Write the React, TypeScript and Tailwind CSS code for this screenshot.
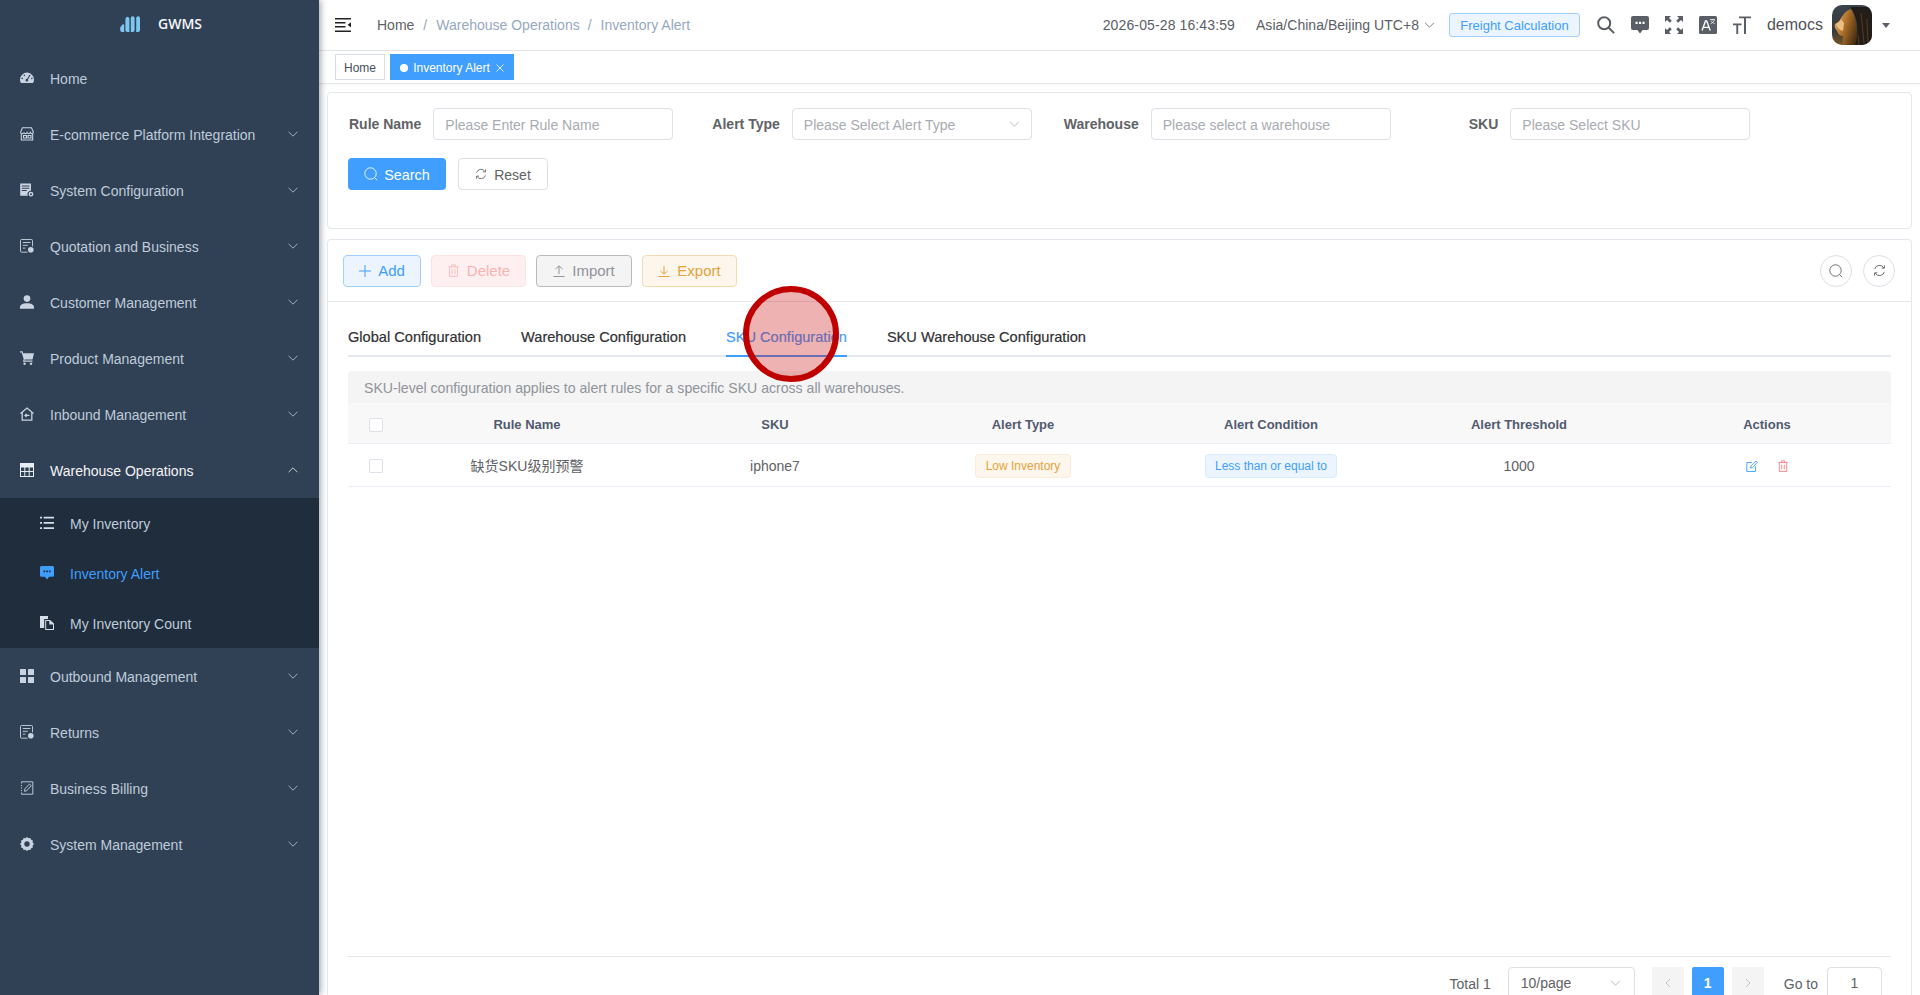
import React from 'react';

type IconProps = { className?: string };

// thin element-style arrows
const ArrowDown = ({ className = '' }: IconProps) => (
  <svg viewBox="0 0 10 6" className={className} fill="none" stroke="currentColor" strokeWidth="0.8">
    <path d="M.6.8 5 5.2 9.4.8" />
  </svg>
);
const ArrowUp = ({ className = '' }: IconProps) => (
  <svg viewBox="0 0 10 6" className={className} fill="none" stroke="currentColor" strokeWidth="0.8">
    <path d="M.6 5.2 5 .8l4.4 4.400" />
  </svg>
);

const IcoDash = () => (
  <svg viewBox="0 0 14 14" className="h-[14px] w-[14px]" fill="currentColor">
    <path fillRule="evenodd" d="M7 1.600A7 7 0 0 0 0 8.600c0 1.500.4 2.600 1 3.500h12c.6-.9 1-2 1-3.500a7 7 0 0 0-7-7ZM4 3.600l1.300.5-.5 1.200-1.300-.5.5-1.200Zm-2.200 3 1.300.4-.4 1.300-1.300-.4.4-1.300Zm7.900-3.200.9.6-2.600 4.500a1.300 1.300 0 1 1-1-.6l2.700-4.500Zm2.600 3.200.4 1.300-1.300.4-.4-1.300 1.300-.4Z" />
  </svg>
);
const IcoShop = () => (
  <svg viewBox="0 0 14 14" className="h-[14px] w-[14px]" fill="none" stroke="currentColor" strokeWidth="1.100">
    <path d="M2.500.8h9L13.400 5c0 1-.9 1.600-1.600 1.600-.8 0-1.400-.5-1.600-1.200-.3.7-.9 1.200-1.600 1.200s-1.300-.5-1.600-1.200c-.3.7-.9 1.200-1.600 1.200s-1.300-.5-1.600-1.200C3.900 6.100 3.200 6.600 2.300 6.600 1.500 6.600.6 6 .6 5L2.500.8Z" />
    <path d="M1.300 6.600v6.400h11.400V6.600M3.500 8.500h3v2.500h-3zM8 8.500h3v2.500H8z" />
  </svg>
);
const IcoConfig = () => (
  <svg viewBox="0 0 14 14" className="h-[14px] w-[14px]" fill="currentColor">
    <path fillRule="evenodd" d="M.2.400h10.800v7.400a3.400 3.400 0 0 0-3.200 5H.2V.4Zm1.600 2v1h7.600v-1H1.800Zm0 2.300v1h7.600v-1H1.800Zm0 2.300v1h5v-1h-5Z" />
    <path fillRule="evenodd" d="M11 8.800a2.400 2.400 0 1 1 0 4.800 2.400 2.400 0 0 1 0-4.800Zm0 1.400a1 1 0 1 0 0 2 1 1 0 0 0 0-2Z" />
  </svg>
);
const IcoForm = () => (
  <svg viewBox="0 0 14 14" className="h-[14px] w-[14px]" fill="none" stroke="currentColor" strokeWidth="0.9">
    <path d="M7.500 13.200H1.500a1 1 0 0 1-1-1V1.500a1 1 0 0 1 1-1h10a1 1 0 0 1 1 1v5.800" />
    <path d="M2.800 3.500h7.600M2.800 6.300h5M2.800 9.100h2.600" />
    <circle cx="10.800" cy="10.800" r="2.800" fill="currentColor" stroke="none" />
  </svg>
);
const IcoUser = () => (
  <svg viewBox="0 0 14 14" className="h-[14px] w-[14px]" fill="currentColor">
    <circle cx="7" cy="3.600" r="3.300" />
    <path d="M0 13.800v-1.600c0-2.500 2.800-4 7-4s7 1.500 7 4v1.600H0Z" />
  </svg>
);
const IcoCart = () => (
  <svg viewBox="0 0 14 14" className="h-[14px] w-[14px]" fill="currentColor">
    <path d="M0 .3h2.500l.6 1.900H14l-1.500 6.400H4.700l-.3 1h8.100v1.100H2.900l.8-2.400L1.700 1.400H0V.3Z" />
    <circle cx="4.600" cy="12.700" r="1.200" />
    <circle cx="11" cy="12.700" r="1.200" />
  </svg>
);
const IcoInbound = () => (
  <svg viewBox="0 0 14 14" className="h-[14px] w-[14px]" fill="none" stroke="currentColor" strokeWidth="1.300">
    <path d="M.5 6.500 7 1l6.500 5.500M2.200 5.400v7.800h9.600V5.400" />
    <path d="M9.500 8.400H5.200M6.600 6.900 5 8.400l1.600 1.500" />
  </svg>
);
const IcoTable = () => (
  <svg viewBox="0 0 14 14" className="h-[14px] w-[14px]" fill="currentColor">
    <path fillRule="evenodd" d="M0 0h14v14H0V0Zm1 4.400V8h3.300V4.400H1Zm4.300 0V8h3.400V4.400H5.300Zm4.400 0V8H13V4.400H9.700ZM1 9v4h3.300V9H1Zm4.300 0v4h3.400V9H5.300Zm4.400 0v4H13V9H9.700Z" />
  </svg>
);
const IcoList = () => (
  <svg viewBox="0 0 14 14" className="h-[14px] w-[14px]" fill="currentColor">
    <path d="M0 .8h2v1.800H0zM3.600.8H14v1.800H3.600zM0 6h2v1.800H0zM3.600 6H14v1.800H3.600zM0 11.200h2V13H0zM3.600 11.200H14V13H3.600z" />
  </svg>
);
const IcoChat = ({ className = 'h-[14px] w-[14px]' }: IconProps) => (
  <svg viewBox="0 0 14 14" className={className} fill="currentColor">
    <path fillRule="evenodd" d="M1.500 0h11A1.500 1.500 0 0 1 14 1.500v7.800a1.500 1.500 0 0 1-1.500 1.500H9.100L7 13.600l-2.100-2.800H1.500A1.500 1.500 0 0 1 0 9.300V1.500A1.500 1.500 0 0 1 1.500 0Zm2 4.500v1.700h1.700V4.500H3.500Zm2.700 0v1.700h1.700V4.500H6.200Zm2.700 0v1.700h1.700V4.500H8.900Z" />
  </svg>
);
const IcoCopy = () => (
  <svg viewBox="0 0 14 14" className="h-[14px] w-[14px]" fill="currentColor">
    <path d="M0 0h8v3H4.200v9H0V0Z" />
    <path fillRule="evenodd" d="M5.200 4H10l4 3.600V14H5.200V4Zm1 1v8h6.800V8.400H9.300V5H6.200Z" />
  </svg>
);
const IcoGrid = () => (
  <svg viewBox="0 0 14 14" className="h-[14px] w-[14px]" fill="currentColor">
    <rect x="0" y="0" width="6" height="6" rx="0.600" />
    <rect x="8" y="0" width="6" height="6" rx="0.600" />
    <rect x="0" y="8" width="6" height="6" rx="0.600" />
    <rect x="8" y="8" width="6" height="6" rx="0.600" />
  </svg>
);
const IcoBill = () => (
  <svg viewBox="0 0 14 14" className="h-[14px] w-[14px]" fill="none" stroke="currentColor" strokeWidth="0.9">
    <path d="M1.500 2.500V.8h11.300v12.400H1.500v-1.700M1.500 4v1.200M1.500 6.500v1.200M1.500 9v1.200" />
    <path d="M4.500 10.300 5 7.800 9.500 3l1.800 1.700-4.500 5-2.300.6Z" />
  </svg>
);
const IcoGear = () => (
  <svg viewBox="0 0 14 14" className="h-[14px] w-[14px]" fill="currentColor">
    <path fillRule="evenodd" d="M7 0l1.500 1.300 1.900-.4.700 1.900 1.800.7-.3 1.900L14 7l-1.400 1.600.3 1.900-1.800.7-.7 1.900-1.900-.4L7 14l-1.500-1.300-1.900.4-.7-1.900-1.800-.7.3-1.900L0 7l1.400-1.600-.3-1.900 1.800-.7.7-1.900 1.900.4L7 0Zm0 4.300a2.700 2.700 0 1 0 0 5.400 2.700 2.700 0 0 0 0-5.400Z" />
  </svg>
);

const SearchLine = ({ className = '' }: IconProps) => (
  <svg viewBox="0 0 14 14" className={className} fill="none" stroke="currentColor" strokeWidth="0.9">
    <circle cx="6.500" cy="6.500" r="5.700" />
    <path d="m10.700 10.700 2.500 2.500" />
  </svg>
);
const RefreshLine = ({ className = '' }: IconProps) => (
  <svg viewBox="0 0 14 14" className={className} fill="none" stroke="currentColor" strokeWidth="1">
    <path d="M1.800 5.500A5.400 5.400 0 0 1 11.700 4.200M12.200 8.500A5.400 5.400 0 0 1 2.300 9.800" />
    <path d="M12.300 1.500v3h-3M1.700 12.500v-3h3" />
  </svg>
);
const TrashLine = ({ className = '' }: IconProps) => (
  <svg viewBox="0 0 14 14" className={className} fill="none" stroke="currentColor" strokeWidth="0.9">
    <path d="M1.500 3h11M5 3V1h4v2M2.700 3v10.300h8.600V3M5.500 5.500v5.500M8.500 5.500v5.500" />
  </svg>
);

const menuTop = [
  { label: 'Home', icon: <IcoDash />, arrow: false },
  { label: 'E-commerce Platform Integration', icon: <IcoShop />, arrow: true },
  { label: 'System Configuration', icon: <IcoConfig />, arrow: true },
  { label: 'Quotation and Business', icon: <IcoForm />, arrow: true },
  { label: 'Customer Management', icon: <IcoUser />, arrow: true },
  { label: 'Product Management', icon: <IcoCart />, arrow: true },
  { label: 'Inbound Management', icon: <IcoInbound />, arrow: true },
];
const menuBottom = [
  { label: 'Outbound Management', icon: <IcoGrid /> },
  { label: 'Returns', icon: <IcoForm /> },
  { label: 'Business Billing', icon: <IcoBill /> },
  { label: 'System Management', icon: <IcoGear /> },
];

function Sidebar() {
  return (
    <aside className="relative z-10 flex h-full w-[319px] shrink-0 flex-col bg-[#304156] shadow-[2px_0_6px_rgba(0,21,41,0.35)]">
      <div className="flex h-[50px] items-center pb-[2px] pl-[120px]">
        <svg viewBox="0 0 22 16" className="h-[16px] w-[22px]">
          <g fill="#7cc6ef">
            <path d="M.2 11.500 2.400 8.500c.7-.7 1.800-.4 1.800.8V16H2.200A2 2 0 0 1 .2 14Z" />
            <path d="M5.400 3.800c0-2 1-3 2-3s2 .9 2 2.300V16H7.400a2 2 0 0 1-2-2Z" />
            <path d="M10.800 2.300c0-1.300.8-2 1.900-2s1.900.8 1.900 2V14a2 2 0 0 1-2 2h-1.800Z" />
            <path d="M16.200 2.300c0-1.300.8-2 1.900-2s1.900.8 1.900 2V14a2 2 0 0 1-2 2h-1.800Z" />
          </g>
        </svg>
        <span className="ml-[16px] font-['Open_Sans',sans-serif] text-[14px] font-semibold leading-none text-[#f4f6f8]">GWMS</span>
      </div>
      {menuTop.map((m) => (
        <div key={m.label} className="flex h-[56px] items-center pl-[20px] pr-[21px] text-[#bfcbd9]">
          <span className="w-[30px] text-[#c9d4e0]">{m.icon}</span>
          <span className="flex-1 pt-[2px] text-[14px]">{m.label}</span>
          {m.arrow && <ArrowDown className="h-[6px] w-[10px]" />}
        </div>
      ))}
      <div className="flex h-[56px] items-center pl-[20px] pr-[21px] text-[#f4f4f5]">
        <span className="w-[30px] text-[#e8edf3]"><IcoTable /></span>
        <span className="flex-1 pt-[3px] text-[14px]">Warehouse Operations</span>
        <ArrowUp className="h-[6px] w-[10px]" />
      </div>
      <div className="bg-[#1f2d3d]">
        <div className="flex h-[50px] items-center pl-[40px] text-[#bfcbd9]">
          <span className="w-[30px] text-[#d5dde6]"><IcoList /></span>
          <span className="pt-[3px] text-[14px]">My Inventory</span>
        </div>
        <div className="flex h-[50px] items-center pl-[40px] text-[#409eff]">
          <span className="w-[30px]"><IcoChat /></span>
          <span className="pt-[3px] text-[14px]">Inventory Alert</span>
        </div>
        <div className="flex h-[50px] items-center pl-[40px] text-[#bfcbd9]">
          <span className="w-[30px] text-[#d5dde6]"><IcoCopy /></span>
          <span className="pt-[3px] text-[14px]">My Inventory Count</span>
        </div>
      </div>
      {menuBottom.map((m) => (
        <div key={m.label} className="flex h-[56px] items-center pl-[20px] pr-[21px] text-[#bfcbd9]">
          <span className="w-[30px] text-[#c9d4e0]">{m.icon}</span>
          <span className="flex-1 pt-[3px] text-[14px]">{m.label}</span>
          <ArrowDown className="h-[6px] w-[10px]" />
        </div>
      ))}
    </aside>
  );
}

function Navbar() {
  return (
    <div className="flex h-[51px] shrink-0 items-center border-b border-[#e2e4e8] pl-[16px] pr-[30px]">
      <svg viewBox="0 0 16 14" className="h-[14px] w-[16px]" fill="#222">
        <path d="M0 0h16v1.600H0zM0 4h10.500v1.600H0zM0 8h10.500v1.600H0zM0 12.400h16V14H0zM16 4.200v5.200l-3.400-2.600z" />
      </svg>
      <div className="ml-[26px] flex items-center pt-[1px] text-[14px] text-[#97a8be]">
        <span className="text-[#606266]">Home</span>
        <span className="mx-[9px] text-[#97a8be]">/</span>
        <span>Warehouse Operations</span>
        <span className="ml-[8px] mr-[9px]">/</span>
        <span>Inventory Alert</span>
      </div>
      <div className="flex-1" />
      <span className="pt-[1px] text-[14px] tracking-[0.12px] text-[#5a5e66]">2026-05-28 16:43:59</span>
      <span className="ml-[21px] pt-[1px] text-[14px] tracking-[0.03px] text-[#5a5e66]">Asia/China/Beijing UTC+8</span>
      <ArrowDown className="ml-[5px] h-[6px] w-[11px] text-[#5a5e66]" />
      <span className="ml-[14px] flex h-[24px] w-[131px] items-center justify-center rounded-[3px] border border-[#a0cfff] bg-[#ecf5ff] pt-[1px] text-[13px] text-[#409eff]">
        Freight Calculation
      </span>
      <svg viewBox="0 0 18 18" className="ml-[17px] h-[18px] w-[18px]" fill="none" stroke="#5a5e66" strokeWidth="2">
        <circle cx="7.200" cy="7.200" r="6" />
        <path d="m11.500 11.500 5.600 5.600" />
      </svg>
      <span className="ml-[16px] text-[#5a5e66]"><IcoChat className="h-[18px] w-[18px]" /></span>
      <svg viewBox="0 0 18 18" className="ml-[16px] h-[18px] w-[18px]" fill="#5a5e66">
        <path d="M0 0h6L4 2l2.800 2.800-2 2L2 4 0 6zM18 0v6l-2-2-2.800 2.800-2-2L14 2l-2-2zM0 18v-6l2 2 2.800-2.800 2 2L4 16l2 2zM18 18h-6l2-2-2.800-2.800 2-2L16 14l2-2z" />
      </svg>
      <svg viewBox="0 0 18 18" className="ml-[16px] h-[18px] w-[18px]">
        <rect width="18" height="18" rx="1.500" fill="#5a5e66" />
        <path d="M3 14.500 6.500 5h1.200l3.500 9.500M4.300 11.300h5.600" stroke="#fff" strokeWidth="1.300" fill="none" />
        <path d="M11 3.500h5M13.500 3v1.300M15.500 3.800c-.5 1.700-2 3.200-4 3.900M12 4.500c.5 1.300 2 2.700 3.800 3.200" stroke="#fff" strokeWidth="0.700" fill="none" />
      </svg>
      <svg viewBox="0 0 18 18" className="ml-[16px] h-[18px] w-[18px]" fill="#5a5e66">
        <path d="M6 .5h12v1.800h-5V18h-2V2.300H6zM0 7.500h8.500v1.700H5.200V18h-1.900V9.200H0z" />
      </svg>
      <span className="ml-[16px] text-[16px] text-[#4f5359]">democs</span>
      <span className="ml-[9px] h-[40px] w-[40px] overflow-hidden rounded-[10px]">
        <svg viewBox="0 0 40 40" className="h-[40px] w-[40px]">
          <defs>
            <linearGradient id="av" x1="0" y1="0" x2="0" y2="1">
              <stop offset="0" stopColor="#39434f" />
              <stop offset="0.65" stopColor="#3a3a36" />
              <stop offset="1" stopColor="#7a5526" />
            </linearGradient>
            <linearGradient id="lion" x1="0" y1="0.2" x2="1" y2="0.7">
              <stop offset="0" stopColor="#e3ad62" />
              <stop offset="0.5" stopColor="#a96c26" />
              <stop offset="1" stopColor="#4a2f14" />
            </linearGradient>
          </defs>
          <rect width="40" height="40" fill="url(#av)" />
          <path d="M18 2h22v38H22C28 28 26 12 18 2Z" fill="#221d19" />
          <path d="M3 19c2-1 5-3 6-6 3-5 6-8 10-9 4 6 6 15 6 24 0 5-1 9-2 12H10c1-4 1-7 1-9-3 0-5-2-6-5-1-2-3-3-2-7Z" fill="url(#lion)" />
          <path d="M4 19c1 3 3 6 7 7l1-8-3-4c-1 2-3 4-5 5Z" fill="#e9bf82" />
          <path d="M29 8l3 30M35 14l1 24M26 30l1 10" stroke="#5a3c1c" strokeWidth="1" fill="none" />
        </svg>
      </span>
      <svg viewBox="0 0 8 5" className="ml-[10px] h-[5px] w-[8px]" fill="#5a5e66">
        <path d="M0 0h8L4 5z" />
      </svg>
    </div>
  );
}

function TagsBar() {
  return (
    <div className="flex h-[33px] shrink-0 items-center gap-[5px] border-b border-[#e4e7eb] pl-[16px] shadow-[0_1px_3px_rgba(0,0,0,0.04)]">
      <span className="flex h-[26px] w-[50px] items-center justify-center border border-[#d8dce5] pt-[1px] text-[12px] text-[#495060]">Home</span>
      <span className="flex h-[26px] w-[124px] items-center justify-center bg-[#409eff] pt-[1px] text-[12px] text-white">
        <span className="mr-[5px] h-[8px] w-[8px] rounded-full bg-white" />
        Inventory Alert
        <svg viewBox="0 0 8 8" className="ml-[6px] h-[8px] w-[8px]" fill="none" stroke="#fff" strokeWidth="0.800">
          <path d="m.5.500 7 7M7.500.500l-7 7" />
        </svg>
      </span>
    </div>
  );
}

function Field({ label, ph, ml, select }: { label: string; ph: string; ml: string; select?: boolean }) {
  return (
    <div className={`flex items-center ${ml}`}>
      <span className="mr-[12px] pt-[1px] text-[14px] font-bold text-[#606266]">{label}</span>
      <div className="flex h-[32px] w-[240px] items-center justify-between rounded-[4px] border border-[#dcdfe6] pl-[11px] pr-[11px]">
        <span className="pt-[2px] text-[14px] text-[#a8abb2]">{ph}</span>
        {select && <ArrowDown className="h-[6px] w-[11px] text-[#a8abb2]" />}
      </div>
    </div>
  );
}

function ToolBtn({ className, icon, label }: { className: string; icon: React.ReactNode; label: string }) {
  return (
    <span className={`flex h-[32px] items-center justify-center rounded-[4px] border text-[15px] ${className}`}>
      {icon}
      <span className="ml-[7px] pt-[2px]">{label}</span>
    </span>
  );
}

export default function App() {
  return (
    <div className="relative flex h-[995px] w-[1920px] overflow-hidden bg-white font-['Liberation_Sans','Noto_Sans_CJK_SC',sans-serif]">
      <Sidebar />
      <div className="flex min-w-0 flex-1 flex-col">
        <Navbar />
        <TagsBar />
        <div className="flex flex-1 flex-col pl-[8px] pr-[8px] pt-[8px]">
          {/* filter card */}
          <div className="h-[137px] shrink-0 rounded-[4px] border border-[#e4e7ed] pl-[21px] pt-[15px]">
            <div className="flex items-center">
              <Field label="Rule Name" ph="Please Enter Rule Name" ml="" />
              <Field label="Alert Type" ph="Please Select Alert Type" ml="ml-[39px]" select />
              <Field label="Warehouse" ph="Please select a warehouse" ml="ml-[32px]" />
              <Field label="SKU" ph="Please Select SKU" ml="ml-[78px]" />
            </div>
            <div className="-ml-[1px] mt-[18px] flex gap-[12px]">
              <span className="flex h-[32px] w-[98px] items-center justify-center rounded-[4px] bg-[#409eff] text-[14px] text-white">
                <SearchLine className="h-[14px] w-[14px]" />
                <span className="ml-[6px] pt-[3px] text-[14.400px]">Search</span>
              </span>
              <span className="flex h-[32px] w-[90px] items-center justify-center rounded-[4px] border border-[#dcdfe6] text-[14px] text-[#606266]">
                <RefreshLine className="h-[12px] w-[12px]" />
                <span className="ml-[7px] pt-[2px]">Reset</span>
              </span>
            </div>
          </div>

          {/* table card */}
          <div className="mt-[10px] flex flex-1 flex-col rounded-t-[4px] border border-b-0 border-[#e4e7ed]">
            <div className="flex h-[62px] shrink-0 items-center border-b border-[#e4e7ed] pl-[15px] pr-[15px]">
              <div className="flex gap-[10px]">
                <ToolBtn
                  className="w-[78px] border-[#a0cfff] bg-[#ecf5ff] text-[#409eff]"
                  icon={<svg viewBox="0 0 12 12" className="h-[12px] w-[12px]" stroke="currentColor" fill="none"><path d="M6 0v12M0 6h12" /></svg>}
                  label="Add"
                />
                <ToolBtn
                  className="w-[95px] border-[#fde2e2] bg-[#fef0f0] text-[#f9b3b3]"
                  icon={<TrashLine className="h-[13px] w-[13px]" />}
                  label="Delete"
                />
                <ToolBtn
                  className="w-[96px] border-[#b8babe] bg-[#f4f4f5] text-[#909399]"
                  icon={<svg viewBox="0 0 12 12" className="h-[12px] w-[12px]" stroke="currentColor" fill="none"><path d="M6 9V1M2.500 4 6 .8 9.500 4M.5 11.500h11" /></svg>}
                  label="Import"
                />
                <ToolBtn
                  className="w-[95px] border-[#f5dab1] bg-[#fdf6ec] text-[#e6a23c]"
                  icon={<svg viewBox="0 0 12 12" className="h-[12px] w-[12px]" stroke="currentColor" fill="none"><path d="M6 1v8M2.500 6 6 9.200 9.500 6M.5 11.500h11" /></svg>}
                  label="Export"
                />
              </div>
              <div className="flex-1" />
              <span className="flex h-[32px] w-[32px] items-center justify-center rounded-full border border-[#dcdfe6] text-[#606266]">
                <SearchLine className="h-[14px] w-[14px]" />
              </span>
              <span className="ml-[11px] mr-[1px] flex h-[32px] w-[32px] items-center justify-center rounded-full border border-[#dcdfe6] text-[#606266]">
                <RefreshLine className="h-[13px] w-[13px]" />
              </span>
            </div>

            <div className="flex flex-1 flex-col pl-[20px] pr-[20px]">
              {/* tabs */}
              <div className="mt-[15px] flex h-[40px] shrink-0 gap-[40px] border-b-2 border-[#e4e7ed] text-[14.600px] text-[#303133] [-webkit-text-stroke:0.2px]">
                {['Global Configuration', 'Warehouse Configuration', 'SKU Configuration', 'SKU Warehouse Configuration'].map((t) => (
                  <span
                    key={t}
                    className={
                      t === 'SKU Configuration'
                        ? 'relative -mb-[2px] flex h-[40px] items-center border-b-2 border-[#409eff] pt-[4px] text-[#409eff]'
                        : 'flex h-[40px] items-center pt-[2px]'
                    }
                  >
                    {t}
                  </span>
                ))}
              </div>

              <div className="mt-[14px] flex h-[32px] shrink-0 items-center rounded-t-[4px] bg-[#f4f4f5] pl-[16px] pt-[3px] text-[14.100px] text-[#909399]">
                SKU-level configuration applies to alert rules for a specific SKU across all warehouses.
              </div>

              {/* table */}
              <div className="grid h-[41px] shrink-0 grid-cols-[55px_repeat(6,1fr)] items-center border-b border-[#ebeef5] bg-[#f8f8f9] pt-[4px] text-[13px] font-bold text-[#515a6e]">
                <span className="ml-[21px] h-[14px] w-[14px] rounded-[2px] border border-[#dcdfe6] bg-white" />
                {['Rule Name', 'SKU', 'Alert Type', 'Alert Condition', 'Alert Threshold', 'Actions'].map((h) => (
                  <span key={h} className="text-center">{h}</span>
                ))}
              </div>
              <div className="grid h-[43px] shrink-0 grid-cols-[55px_repeat(6,1fr)] items-center border-b border-[#ebeef5] pt-[2px] text-[14px] text-[#606266]">
                <span className="ml-[21px] h-[14px] w-[14px] rounded-[2px] border border-[#dcdfe6] bg-white" />
                <span className="text-center">缺货SKU级别预警</span>
                <span className="text-center">iphone7</span>
                <span className="flex justify-center">
                  <span className="flex h-[24px] w-[96px] items-center justify-center rounded-[4px] border border-[#faecd8] bg-[#fdf6ec] text-[12px] text-[#e6a23c]">Low Inventory</span>
                </span>
                <span className="flex justify-center">
                  <span className="flex h-[24px] w-[132px] items-center justify-center rounded-[4px] border border-[#d9ecff] bg-[#ecf5ff] text-[12px] text-[#409eff]">Less than or equal to</span>
                </span>
                <span className="text-center">1000</span>
                <span className="flex justify-center gap-[19px] pl-[1px]">
                  <svg viewBox="0 0 12 12" className="h-[12px] w-[12px] text-[#409eff]" fill="none" stroke="currentColor" strokeWidth="0.900">
                    <path d="M9.500 6.500v5H.8V2.500h5" />
                    <path d="M4.500 8l.4-2L10 1l1.400 1.400L6.400 7.500Z" />
                  </svg>
                  <TrashLine className="h-[12px] w-[12px] text-[#f56c6c]" />
                </span>
              </div>

              <div className="flex-1" />

              {/* pager */}
              <div className="flex h-[39px] shrink-0 items-start border-t border-[#e4e7ed] pt-[10px] text-[14px] text-[#606266]">
                <div className="flex-1" />
                <span className="pt-[1px] leading-[32px]">Total 1</span>
                <span className="ml-[17px] flex h-[32px] w-[127px] items-center justify-between rounded-[4px] border border-[#dcdfe6] pl-[12px] pr-[13px]">
                  10/page
                  <ArrowDown className="h-[6px] w-[11px] text-[#a8abb2]" />
                </span>
                <span className="ml-[17px] flex h-[32px] w-[32px] items-center justify-center rounded-[2px] bg-[#f4f4f5] text-[#c0c4cc]">
                  <svg viewBox="0 0 6 10" className="h-[10px] w-[6px]" fill="none" stroke="currentColor"><path d="M5 1 1 5l4 4" /></svg>
                </span>
                <span className="ml-[8px] flex h-[32px] w-[32px] items-center justify-center rounded-[2px] bg-[#409eff] font-bold text-white">1</span>
                <span className="ml-[8px] flex h-[32px] w-[32px] items-center justify-center rounded-[2px] bg-[#f4f4f5] text-[#c0c4cc]">
                  <svg viewBox="0 0 6 10" className="h-[10px] w-[6px]" fill="none" stroke="currentColor"><path d="m1 1 4 4-4 4" /></svg>
                </span>
                <span className="ml-[20px] pt-[1px] leading-[32px]">Go to</span>
                <span className="ml-[9px] mr-[9px] flex h-[32px] w-[55px] items-center justify-center rounded-[4px] border border-[#dcdfe6]">1</span>
              </div>
            </div>
          </div>
        </div>
      </div>

      {/* click marker over the page */}
      <div className="pointer-events-none absolute left-[743px] top-[286px] z-20 h-[96px] w-[96px] rounded-full border-[6px] border-[#bf0000] bg-[#cc0000]/30" />
    </div>
  );
}
